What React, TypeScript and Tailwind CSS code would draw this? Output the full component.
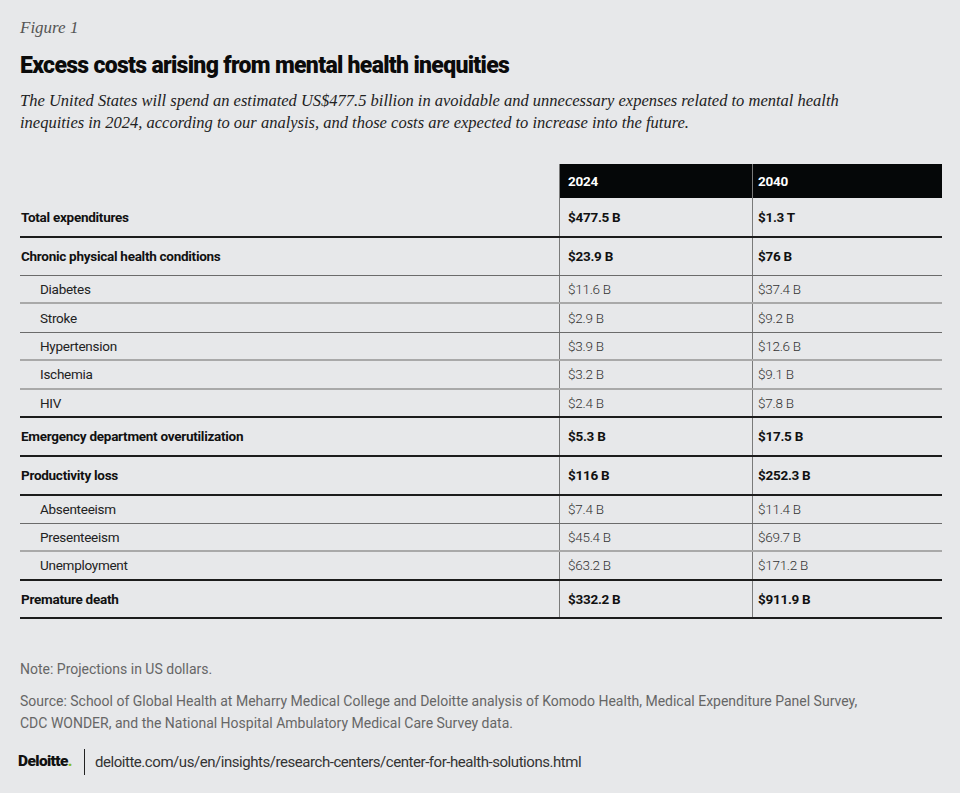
import React from 'react';

type Row = {
  label: string;
  v2024: string;
  v2040: string;
  bold?: boolean;
  h: string;
  line: 'thick' | 'thin' | 'light';
};

const rows: Row[] = [
  { label: 'Total expenditures', v2024: '$477.5 B', v2040: '$1.3 T', bold: true, h: 'h-[40px]', line: 'thick' },
  { label: 'Chronic physical health conditions', v2024: '$23.9 B', v2040: '$76 B', bold: true, h: 'h-[38px]', line: 'thin' },
  { label: 'Diabetes', v2024: '$11.6 B', v2040: '$37.4 B', h: 'h-[28px]', line: 'light' },
  { label: 'Stroke', v2024: '$2.9 B', v2040: '$9.2 B', h: 'h-[29px]', line: 'thin' },
  { label: 'Hypertension', v2024: '$3.9 B', v2040: '$12.6 B', h: 'h-[28px]', line: 'light' },
  { label: 'Ischemia', v2024: '$3.2 B', v2040: '$9.1 B', h: 'h-[29px]', line: 'light' },
  { label: 'HIV', v2024: '$2.4 B', v2040: '$7.8 B', h: 'h-[28px]', line: 'thick' },
  { label: 'Emergency department overutilization', v2024: '$5.3 B', v2040: '$17.5 B', bold: true, h: 'h-[39px]', line: 'thick' },
  { label: 'Productivity loss', v2024: '$116 B', v2040: '$252.3 B', bold: true, h: 'h-[39px]', line: 'thick' },
  { label: 'Absenteeism', v2024: '$7.4 B', v2040: '$11.4 B', h: 'h-[28px]', line: 'thin' },
  { label: 'Presenteeism', v2024: '$45.4 B', v2040: '$69.7 B', h: 'h-[28px]', line: 'light' },
  { label: 'Unemployment', v2024: '$63.2 B', v2040: '$171.2 B', h: 'h-[29px]', line: 'thick' },
  { label: 'Premature death', v2024: '$332.2 B', v2040: '$911.9 B', bold: true, h: 'h-[38px]', line: 'thick' },
];

const lineClass = {
  thick: 'border-b-2 border-[#1c1c1c]',
  thin: 'border-b border-[#6b6b6b]',
  light: 'border-b-2 border-[#a9a9a9]',
};

const TableRow = ({ row }: { row: Row }) => {
  const text = row.bold ? 'font-bold text-[#111]' : 'font-light text-[#333]';
  return (
    <div className={`grid grid-cols-[539px_193px_190px] ${row.h} ${lineClass[row.line]}`}>
      <div className={`flex items-center ${row.bold ? 'pl-[1px] font-bold text-[#111]' : 'pl-[20px] text-[#222]'}`}>
        {row.label}
      </div>
      <div className={`flex items-center pl-[8px] border-l border-[#7a7a7a] ${text}`}>
        {row.v2024}
      </div>
      <div className={`flex items-center pl-[5px] border-l border-[#7a7a7a] ${text}`}>
        {row.v2040}
      </div>
    </div>
  );
};

export default function App() {
  return (
    <div className="w-[960px] h-[793px] bg-[#e7e8ea] px-[20px] pt-[17px] font-['Roboto',sans-serif] overflow-hidden">
      <div className="font-['Liberation_Serif',serif] italic text-[17px] text-[#555] leading-[22px]">
        Figure 1
      </div>
      <h1 className="mt-[13px] text-[23px] leading-[28px] font-black tracking-[-0.03em] text-[#0b0b0b]">
        Excess costs arising from mental health inequities
      </h1>
      <p className="mt-[10px] font-['Liberation_Serif',serif] italic text-[16.5px] leading-[22px] text-[#222]">
        The United States will spend an estimated US$477.5 billion in avoidable and unnecessary expenses related to mental health
        <br />
        inequities in 2024, according to our analysis, and those costs are expected to increase into the future.
      </p>

      <div className="mt-[30px] w-[922px] text-[13.5px] tracking-[-0.02em]">
        <div className="grid grid-cols-[539px_193px_190px] h-[34px]">
          <div />
          <div className="flex items-center pl-[8px] bg-[#050708] text-white font-bold border-l border-[#7a7a7a]">
            2024
          </div>
          <div className="flex items-center pl-[5px] bg-[#050708] text-white font-bold border-l border-[#7a7a7a]">
            2040
          </div>
        </div>
        {rows.map((row) => (
          <TableRow key={row.label} row={row} />
        ))}
      </div>

      <div className="mt-[39px] text-[14px] text-[#666] leading-[22px]">
        <p>Note: Projections in US dollars.</p>
        <p className="mt-[10px]">
          Source: School of Global Health at Meharry Medical College and Deloitte analysis of Komodo Health, Medical Expenditure Panel Survey,
          <br />
          CDC WONDER, and the National Hospital Ambulatory Medical Care Survey data.
        </p>
      </div>

      <div className="mt-[15px] flex items-center">
        <span className="-ml-[2px] text-[15.5px] font-black tracking-[-0.04em] text-[#111]">
          Deloitte<span className="text-[#86bc25]">.</span>
        </span>
        <span className="ml-[12px] mr-[10px] h-[26px] border-l border-[#222]" />
        <span className="text-[15px] tracking-[-0.03em] text-[#333]">
          deloitte.com/us/en/insights/research-centers/center-for-health-solutions.html
        </span>
      </div>
    </div>
  );
}
